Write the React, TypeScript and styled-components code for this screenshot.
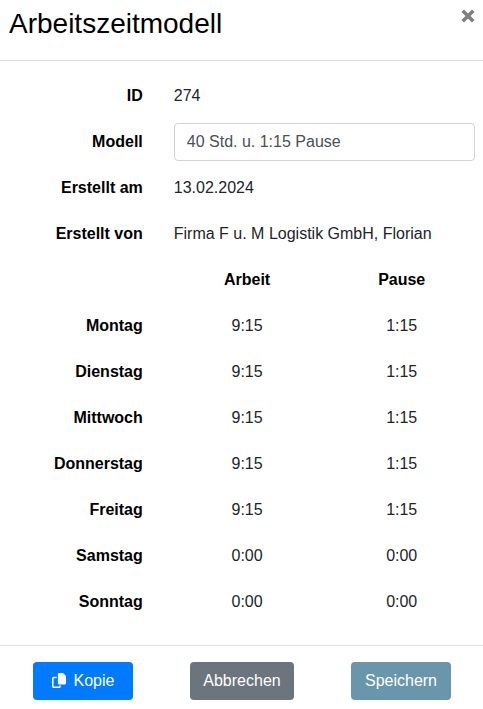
import React, { useState } from "react";
import styled, { createGlobalStyle } from "styled-components";

const GlobalStyle = createGlobalStyle`
  *, *::before, *::after {
    box-sizing: border-box;
  }
  body {
    margin: 0;
    background: #fff;
    color: #212529;
    font-family: "Liberation Sans", Arial, sans-serif;
    font-size: 16px;
    line-height: 24px;
  }
`;

const Dialog = styled.form`
  display: flex;
  flex-direction: column;
`;

const Header = styled.header`
  display: flex;
  align-items: flex-start;
  justify-content: space-between;
  padding: 7px 8px 19px 9px;
  border-bottom: 1px solid #dee2e6;
`;

const Title = styled.h1`
  margin: 0;
  color: #000;
  font-size: 28px;
  font-weight: 400;
  line-height: 34px;
`;

const CloseButton = styled.button`
  display: flex;
  padding: 2px 0;
  border: 0;
  background: transparent;
  color: #7f7f7f;
  cursor: pointer;
`;

const Body = styled.main`
  padding: 12px 8px 20px;
`;

const Field = styled.div`
  display: grid;
  grid-template-columns: 35.5% minmax(0, 1fr);
  align-items: center;
  height: 46px;
`;

const FieldLabel = styled.label`
  padding-right: 31px;
  color: #000;
  font-weight: 700;
  text-align: right;
`;

const FieldValue = styled.output`
  white-space: nowrap;
`;

const TextInput = styled.input`
  width: 100%;
  height: 38px;
  padding: 6px 12px;
  border: 1px solid #ced4da;
  border-radius: 4px;
  background: #fff;
  color: #495057;
  font: inherit;
`;

const Schedule = styled.table`
  width: 100%;
  table-layout: fixed;
  border-collapse: collapse;
`;

const LabelColumn = styled.col`
  width: 35.5%;
`;

const ScheduleRow = styled.tr`
  height: 46px;
`;

const DayCell = styled.th`
  padding: 0 31px 0 0;
  color: #000;
  text-align: right;
`;

const ColumnHead = styled.th<{ $side: "left" | "right" }>`
  padding: 0;
  padding-${(p) => (p.$side === "left" ? "right" : "left")}: 4px;
  color: #000;
  text-align: center;
`;

const TimeCell = styled.td<{ $side: "left" | "right" }>`
  padding: 0;
  padding-${(p) => (p.$side === "left" ? "right" : "left")}: 4px;
  text-align: center;
`;

const Footer = styled.footer`
  display: flex;
  justify-content: space-between;
  padding: 16px 32px 8px 33px;
  border-top: 1px solid #dee2e6;
`;

const Button = styled.button<{ $color: string }>`
  display: flex;
  align-items: center;
  justify-content: center;
  gap: 8px;
  min-width: 100px;
  height: 38px;
  padding: 0 13px;
  border: 0;
  border-radius: 4px;
  background: ${(p) => p.$color};
  color: #fff;
  font: inherit;
  cursor: pointer;
`;

const CloseIcon = () => (
  <svg width="14" height="14" viewBox="0 0 14 14" aria-hidden="true">
    <path d="M3 3L11 11M11 3L3 11" stroke="currentColor" strokeWidth="3.6" strokeLinecap="square" />
  </svg>
);

const CopyIcon = () => (
  <svg width="14" height="16" viewBox="0 0 14 16" aria-hidden="true">
    <path
      d="M7 0H11L14 3V10.3Q14 11.4 12.9 11.4H7Q5.9 11.4 5.9 10.3V1.1Q5.9 0 7 0Z"
      fill="currentColor"
    />
    <path
      d="M4.7 4.4H1.6Q.8 4.4 .8 5.2V13.4Q.8 14.2 1.6 14.2H7.2Q8 14.2 8 13.4V12.4"
      fill="none"
      stroke="currentColor"
      strokeWidth="1.5"
    />
  </svg>
);

const days = [
  { name: "Montag", work: "9:15", pause: "1:15" },
  { name: "Dienstag", work: "9:15", pause: "1:15" },
  { name: "Mittwoch", work: "9:15", pause: "1:15" },
  { name: "Donnerstag", work: "9:15", pause: "1:15" },
  { name: "Freitag", work: "9:15", pause: "1:15" },
  { name: "Samstag", work: "0:00", pause: "0:00" },
  { name: "Sonntag", work: "0:00", pause: "0:00" },
];

export default function App() {
  const [model, setModel] = useState("40 Std. u. 1:15 Pause");

  return (
    <>
      <GlobalStyle />
      <Dialog onSubmit={(e) => e.preventDefault()}>
        <Header>
          <Title>Arbeitszeitmodell</Title>
          <CloseButton type="button" aria-label="Schließen">
            <CloseIcon />
          </CloseButton>
        </Header>
        <Body>
          <Field>
            <FieldLabel htmlFor="id">ID</FieldLabel>
            <FieldValue id="id">274</FieldValue>
          </Field>
          <Field>
            <FieldLabel htmlFor="model">Modell</FieldLabel>
            <TextInput id="model" type="text" value={model} onChange={(e) => setModel(e.target.value)} />
          </Field>
          <Field>
            <FieldLabel htmlFor="created-at">Erstellt am</FieldLabel>
            <FieldValue id="created-at">13.02.2024</FieldValue>
          </Field>
          <Field>
            <FieldLabel htmlFor="created-by">Erstellt von</FieldLabel>
            <FieldValue id="created-by">Firma F u. M Logistik GmbH, Florian</FieldValue>
          </Field>
          <Schedule>
            <colgroup>
              <LabelColumn />
              <col />
              <col />
            </colgroup>
            <thead>
              <ScheduleRow>
                <td />
                <ColumnHead scope="col" $side="left">Arbeit</ColumnHead>
                <ColumnHead scope="col" $side="right">Pause</ColumnHead>
              </ScheduleRow>
            </thead>
            <tbody>
              {days.map((day) => (
                <ScheduleRow key={day.name}>
                  <DayCell scope="row">{day.name}</DayCell>
                  <TimeCell $side="left">{day.work}</TimeCell>
                  <TimeCell $side="right">{day.pause}</TimeCell>
                </ScheduleRow>
              ))}
            </tbody>
          </Schedule>
        </Body>
        <Footer>
          <Button type="button" $color="#007bff">
            <CopyIcon />
            Kopie
          </Button>
          <Button type="button" $color="#6c757d">Abbrechen</Button>
          <Button type="submit" $color="#6996ab">Speichern</Button>
        </Footer>
      </Dialog>
    </>
  );
}
